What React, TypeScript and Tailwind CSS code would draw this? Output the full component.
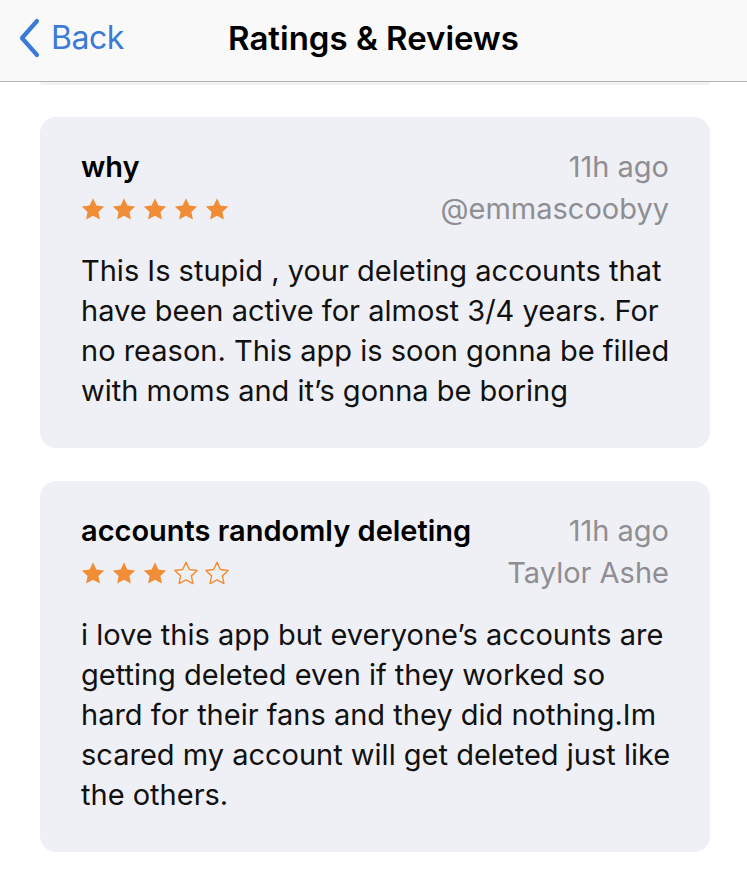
const reviews = [
  {
    title: "why",
    stars: 5,
    time: "11h ago",
    author: "@emmascoobyy",
    lines: [
      "This Is stupid , your deleting accounts that",
      "have been active for almost 3/4 years. For",
      "no reason. This app is soon gonna be filled",
      "with moms and it’s gonna be boring",
    ],
  },
  {
    title: "accounts randomly deleting",
    stars: 3,
    time: "11h ago",
    author: "Taylor Ashe",
    lines: [
      "i love this app but everyone’s accounts are",
      "getting deleted even if they worked so",
      "hard for their fans and they did nothing.Im",
      "scared my account will get deleted just like",
      "the others.",
    ],
  },
];

function Star({ filled }: { filled: boolean }) {
  return (
    <svg width="26" height="25" viewBox="0 0 24 23">
      <path
        d="M12 1.2l3.1 6.6 7.2.9-5.3 5 1.4 7.1L12 17.3l-6.4 3.5L7 13.7l-5.3-5 7.2-.9z"
        fill={filled ? "#f08d36" : "none"}
        stroke="#f08d36"
        strokeWidth={filled ? 0 : 1.3}
        strokeLinejoin="round"
      />
    </svg>
  );
}

export default function App() {
  return (
    <div className="min-h-[883px] w-[747px] overflow-hidden bg-white font-['Inter',sans-serif] text-black">
      <header className="relative flex h-[82px] items-center border-b border-[#b4b4b8] bg-[#f9f9fa] pb-[6px]">
        <div className="flex items-center pl-[17px] text-[#3a7bd5]">
          <svg width="24" height="42" viewBox="0 0 24 42">
            <path d="M20 4L5 21l15 17" fill="none" stroke="currentColor" strokeWidth="4.2" strokeLinecap="round" strokeLinejoin="round" />
          </svg>
          <span className="ml-[10px] text-[32px] tracking-[-0.5px]">Back</span>
        </div>
        <h1 className="absolute left-1/2 top-[14px] -translate-x-1/2 whitespace-nowrap text-[33px] font-semibold leading-[48px]">
          Ratings &amp; Reviews
        </h1>
      </header>
      <div className="ml-[40px] mr-[37px] h-[3px] rounded-b-lg bg-[#f2f2f5]" />

      <main className="flex flex-col gap-[33px] pl-[40px] pr-[37px] pt-[32px]">
        {reviews.map((r) => (
          <div key={r.title} className="rounded-[16px] bg-[#eff0f5] px-[41px] pb-[37px] pt-[32px]">
            <div className="flex justify-between">
              <div>
                <div className="h-[36px] whitespace-nowrap text-[29px] font-semibold leading-[36px]">{r.title}</div>
                <div className="mt-[12px] flex h-[25px] gap-[5px] -ml-[1px]">
                  {[0, 1, 2, 3, 4].map((i) => (
                    <Star key={i} filled={i < r.stars} />
                  ))}
                </div>
              </div>
              <div className="whitespace-nowrap text-right text-[29px] text-[#8e8e93]">
                <div className="h-[36px] leading-[36px]">{r.time}</div>
                <div className="mt-[11px] h-[26px] leading-[26px]">{r.author}</div>
              </div>
            </div>
            <div className="mt-[29px] whitespace-nowrap text-[29px] leading-[40px] text-[#111]">
              {r.lines.map((l) => (
                <div key={l}>{l}</div>
              ))}
            </div>
          </div>
        ))}
      </main>
    </div>
  );
}
